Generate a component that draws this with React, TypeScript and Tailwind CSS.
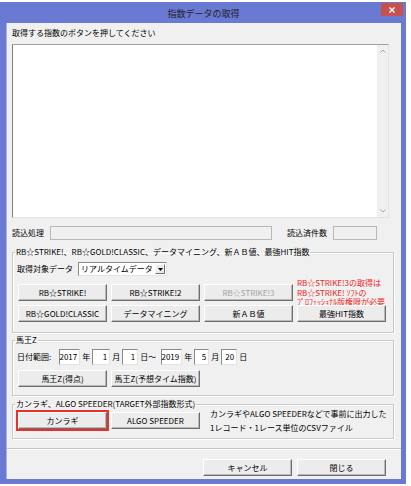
import type { ReactNode } from 'react';

const btnBase =
  'flex items-center justify-center h-[17px] w-[89px] bg-[#ececec] border border-t-white border-l-white border-r-[#6e6e6e] border-b-[#6e6e6e] shadow-[inset_-1px_-1px_0_#b9b9b9] text-[8px] leading-none whitespace-nowrap';

function Btn({
  children,
  disabled,
  className = '',
}: {
  children: ReactNode;
  disabled?: boolean;
  className?: string;
}) {
  return (
    <button type="button" className={`${btnBase} ${disabled ? 'text-[#a3a3a3]' : 'text-black'} ${className}`}>
      {children}
    </button>
  );
}

function Field({ value, w }: { value: string; w: string }) {
  return (
    <div
      className={`${w} h-[16px] bg-white border border-t-[#8a8a8a] border-l-[#8a8a8a] border-r-[#e3e3e3] border-b-[#e3e3e3] flex items-center justify-end pr-[2px] text-[8px] leading-none`}
    >
      {value}
    </div>
  );
}

function Group({ title, h, children }: { title: string; h: string; children: ReactNode }) {
  return (
    <fieldset className={`${h} w-[382px] border border-[#c9c9c9] shadow-[inset_1px_1px_0_#ffffff,1px_1px_0_#ffffff]`}>
      <legend className="ml-[2px] px-[1px] text-[8px] leading-[10px] text-black">{title}</legend>
      {children}
    </fieldset>
  );
}

export default function App() {
  return (
    <div className="w-[411px] h-[486px] bg-white pt-[2px] font-['Noto_Sans_CJK_JP','Noto_Sans',sans-serif] text-black">
      <div className="w-[406px] h-[482px] bg-[#6a79d1] flex flex-col pl-[6px] pr-[5px] pb-[5px]">
        {/* title bar */}
        <div className="h-[21px] grid grid-cols-[1fr_auto_1fr] items-start">
          <div />
          <div className="pt-[6px] text-[9px] leading-[11px] text-[#1e1e2e]">指数データの取得</div>
          <div className="flex justify-end pt-[1px] -mr-[2px]">
            <div className="w-[22px] h-[13px] bg-[#c75050] flex items-center justify-center">
              <svg width="6" height="6" viewBox="0 0 6 6">
                <path d="M0.5 0.5 L5.5 5.5 M5.5 0.5 L0.5 5.5" stroke="#ffffff" strokeWidth="1.4" />
              </svg>
            </div>
          </div>
        </div>

        {/* client */}
        <div className="flex-1 bg-[#f0f0f0] border-l border-[#aab3e6] pl-[5px] flex flex-col">
          <div className="mt-[5px] h-[10px] text-[8px] leading-[10px]">取得する指数のボタンを押してください</div>

          <div className="mt-[6px] w-[377px] h-[174px] bg-white border border-t-[#a0a0a0] border-l-[#828282] border-r-[#e3e3e3] border-b-[#e3e3e3] flex justify-end">
            <div className="w-[11px] h-full bg-[#f0f0f0] flex flex-col justify-between items-center py-[4px]">
              <svg width="6" height="4" viewBox="0 0 6 4">
                <path d="M0.5 3.5 L3 1 L5.5 3.5" stroke="#a5a5a5" fill="none" strokeWidth="1" />
              </svg>
              <svg width="6" height="4" viewBox="0 0 6 4">
                <path d="M0.5 0.5 L3 3 L5.5 0.5" stroke="#a5a5a5" fill="none" strokeWidth="1" />
              </svg>
            </div>
          </div>

          <div className="mt-[8px] h-[14px] flex items-center text-[8px] leading-none">
            <span>読込処理</span>
            <div className="ml-[6px] w-[222px] h-[14px] border border-[#b8b8b8] bg-[#f0f0f0]" />
            <span className="ml-[15px]">読込済件数</span>
            <div className="ml-[6px] w-[44px] h-[14px] border border-[#b8b8b8] bg-[#f0f0f0]" />
          </div>

          <div className="mt-[7px]">
            <Group title="RB☆STRIKE!、RB☆GOLD!CLASSIC、データマイニング、新ＡＢ値、最強HIT指数" h="h-[86px]">
              <div className="mt-[5px] h-[14px] pl-[4px] flex items-center text-[8px] leading-none">
                <span>取得対象データ</span>
                <div className="ml-[5px] w-[89px] h-[14px] bg-white border border-t-[#8a8a8a] border-l-[#8a8a8a] border-r-[#e3e3e3] border-b-[#e3e3e3] flex items-center justify-between pl-[2px] pr-[1px]">
                  <span>リアルタイムデータ</span>
                  <div className="w-[10px] h-[10px] bg-[#ececec] border border-t-white border-l-white border-r-[#6e6e6e] border-b-[#6e6e6e] flex items-center justify-center">
                    <svg width="5" height="3" viewBox="0 0 5 3">
                      <path d="M0 0 L5 0 L2.5 3 Z" fill="#000000" />
                    </svg>
                  </div>
                </div>
              </div>
              <div className="mt-[8px] pl-[5px] grid grid-cols-[89px_89px_89px_89px] grid-rows-[17px_17px] gap-x-[4px] gap-y-[4px]">
                <Btn>RB☆STRIKE!</Btn>
                <Btn>RB☆STRIKE!2</Btn>
                <Btn disabled>RB☆STRIKE!3</Btn>
                <div className="-mt-[6px] text-[8px] leading-[9.5px] text-[#ee2424] whitespace-nowrap">
                  <div>RB☆STRIKE!3の取得は</div>
                  <div>RB☆STRIKE! ｿﾌﾄの</div>
                  <div>ﾌﾟﾛﾌｪｯｼｮﾅﾙ版権限が必要</div>
                </div>
                <Btn>RB☆GOLD!CLASSIC</Btn>
                <Btn>データマイニング</Btn>
                <Btn>新ＡＢ値</Btn>
                <Btn>最強HIT指数</Btn>
              </div>
            </Group>
          </div>

          <div className="mt-[2px]">
            <Group title="馬王Z" h="h-[61px]">
              <div className="mt-[4px] h-[16px] pl-[4px] flex items-center gap-[2px] text-[8px] leading-none">
                <span className="mr-[6px]">日付範囲:</span>
                <Field value="2017" w="w-[21px]" />
                <span>年</span>
                <Field value="1" w="w-[18px]" />
                <span>月</span>
                <Field value="1" w="w-[16px]" />
                <span>日～</span>
                <span className="w-[1px]" />
                <Field value="2019" w="w-[21px]" />
                <span>年</span>
                <Field value="5" w="w-[15px]" />
                <span>月</span>
                <Field value="20" w="w-[16px]" />
                <span>日</span>
              </div>
              <div className="mt-[5px] pl-[5px] flex gap-[4px]">
                <Btn>馬王Z(得点)</Btn>
                <Btn>馬王Z(予想タイム指数)</Btn>
              </div>
            </Group>
          </div>

          <div className="mt-[3px]">
            <Group title="カンラギ、ALGO SPEEDER(TARGET外部指数形式)" h="h-[40px]">
              <div className="mt-[3px] h-[17px] pl-[5px] flex items-center">
                <Btn className="outline-2 outline-[#e8312c]">カンラギ</Btn>
                <Btn className="ml-[4px]">ALGO SPEEDER</Btn>
                <div className="ml-[10px] text-[8px] leading-[14px] whitespace-nowrap">
                  <div>カンラギやALGO SPEEDERなどで事前に出力した</div>
                  <div>1レコード・1レース単位のCSVファイル</div>
                </div>
              </div>
            </Group>
          </div>

          <div className="mt-[9px] -ml-[5px] h-[2px] border-t border-t-[#c3c3c3] border-b border-b-white" />

          <div className="mt-[9px] flex justify-end pr-[15px] gap-[5px]">
            <Btn className="border-black shadow-[inset_-1px_-1px_0_#6e6e6e,inset_1px_1px_0_#ffffff]">キャンセル</Btn>
            <Btn>閉じる</Btn>
          </div>
        </div>
      </div>
    </div>
  );
}
